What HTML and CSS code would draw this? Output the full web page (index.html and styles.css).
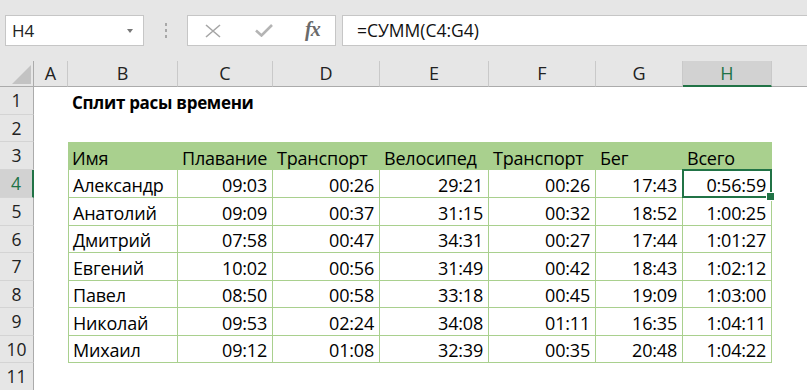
FILE: index.html
```html
<!DOCTYPE html>
<html lang="ru">
<head>
<meta charset="utf-8">
<link rel="stylesheet" href="styles.css">
</head>
<body>
<div class="app">
  <div class="toolbar">
    <div class="namebox"><span class="nb-text">H4</span><span class="nb-arrow"></span></div>
    <div class="grip"><i></i><i></i><i></i></div>
    <div class="fxbtns">
      <svg class="ic-x" width="16" height="14" viewBox="0 0 16 14"><path d="M1 1 L15 13 M15 1 L1 13" stroke="#a6a6a6" stroke-width="1.6" fill="none"/></svg>
      <svg class="ic-check" width="18" height="13" viewBox="0 0 18 13"><path d="M1 6.5 L6.5 11.5 L17 1" stroke="#b4b4b4" stroke-width="2.6" fill="none"/></svg>
      <span class="ic-fx">fx</span>
    </div>
    <div class="formula">=СУММ(C4:G4)</div>
  </div>
  <div class="sheet">
    <div class="ch corner"><svg width="34" height="26" viewBox="0 0 34 26"><path d="M12 23 L31 23 L31 4 Z" fill="#c3c3c3"/></svg></div>
    <div class="ch">A</div><div class="ch">B</div><div class="ch">C</div><div class="ch">D</div><div class="ch">E</div><div class="ch">F</div><div class="ch">G</div><div class="ch sel">H</div><div class="ch last"></div>

    <div class="rh">1</div><div class="c"></div><div class="c title">Сплит расы времени</div><div class="c"></div><div class="c"></div><div class="c"></div><div class="c"></div><div class="c"></div><div class="c"></div><div class="c"></div>

    <div class="rh">2</div><div class="c"></div><div class="c"></div><div class="c"></div><div class="c"></div><div class="c"></div><div class="c"></div><div class="c"></div><div class="c"></div><div class="c"></div>

    <div class="rh">3</div><div class="c"></div><div class="c th">Имя</div><div class="c th">Плавание</div><div class="c th">Транспорт</div><div class="c th">Велосипед</div><div class="c th">Транспорт</div><div class="c th">Бег</div><div class="c th">Всего</div><div class="c"></div>

    <div class="rh sel">4</div><div class="c"></div><div class="c td first">Александр</div><div class="c td num">09:03</div><div class="c td num">00:26</div><div class="c td num">29:21</div><div class="c td num">00:26</div><div class="c td num">17:43</div><div class="c td num active">0:56:59</div><div class="c"></div>

    <div class="rh">5</div><div class="c"></div><div class="c td first">Анатолий</div><div class="c td num">09:09</div><div class="c td num">00:37</div><div class="c td num">31:15</div><div class="c td num">00:32</div><div class="c td num">18:52</div><div class="c td num">1:00:25</div><div class="c"></div>

    <div class="rh">6</div><div class="c"></div><div class="c td first">Дмитрий</div><div class="c td num">07:58</div><div class="c td num">00:47</div><div class="c td num">34:31</div><div class="c td num">00:27</div><div class="c td num">17:44</div><div class="c td num">1:01:27</div><div class="c"></div>

    <div class="rh">7</div><div class="c"></div><div class="c td first">Евгений</div><div class="c td num">10:02</div><div class="c td num">00:56</div><div class="c td num">31:49</div><div class="c td num">00:42</div><div class="c td num">18:43</div><div class="c td num">1:02:12</div><div class="c"></div>

    <div class="rh">8</div><div class="c"></div><div class="c td first">Павел</div><div class="c td num">08:50</div><div class="c td num">00:58</div><div class="c td num">33:18</div><div class="c td num">00:45</div><div class="c td num">19:09</div><div class="c td num">1:03:00</div><div class="c"></div>

    <div class="rh">9</div><div class="c"></div><div class="c td first">Николай</div><div class="c td num">09:53</div><div class="c td num">02:24</div><div class="c td num">34:08</div><div class="c td num">01:11</div><div class="c td num">16:35</div><div class="c td num">1:04:11</div><div class="c"></div>

    <div class="rh">10</div><div class="c"></div><div class="c td first">Михаил</div><div class="c td num">09:12</div><div class="c td num">01:08</div><div class="c td num">32:39</div><div class="c td num">00:35</div><div class="c td num">20:48</div><div class="c td num">1:04:22</div><div class="c"></div>

    <div class="rh">11</div><div class="c"></div><div class="c"></div><div class="c"></div><div class="c"></div><div class="c"></div><div class="c"></div><div class="c"></div><div class="c"></div><div class="c"></div>
  </div>
</div>
</body>
</html>
```
FILE: styles.css
```css
* { box-sizing: border-box; }
html, body { margin: 0; padding: 0; }
body {
  width: 807px;
  height: 390px;
  overflow: hidden;
  background: #fff;
  font-family: "Open Sans", "Noto Sans", sans-serif;
}
.app { display: flex; flex-direction: column; }
.toolbar {
  height: 61px;
  background: #e6e6e6;
  display: flex;
  align-items: flex-start;
  padding-top: 15px;
  padding-left: 5px;
}
.namebox {
  width: 139px;
  height: 31px;
  background: #fff;
  border: 1px solid #c6c6c6;
  display: flex;
  align-items: center;
  justify-content: space-between;
  padding: 0 10px 0 6px;
}
.nb-text { font-size: 17px; color: #222; }
.nb-arrow {
  width: 0; height: 0;
  border-left: 3.5px solid transparent;
  border-right: 3.5px solid transparent;
  border-top: 4px solid #777;
}
.grip {
  width: 43px;
  height: 31px;
  display: flex;
  flex-direction: column;
  align-items: center;
  justify-content: center;
  gap: 3px;
}
.grip i { display: block; width: 2px; height: 3px; background: #a8a8a8; }
.fxbtns {
  width: 149px;
  height: 31px;
  background: #fff;
  border: 1px solid #c6c6c6;
  display: flex;
  align-items: center;
  padding-left: 17px;
}
.ic-x { margin-right: 34px; }
.ic-check { margin-right: 32px; }
.ic-fx {
  font-family: "Liberation Serif", serif;
  font-style: italic;
  font-weight: bold;
  font-size: 20px;
  color: #6a6a6a;
  letter-spacing: -1px;
  margin-top: -3px;
}
.formula {
  margin-left: 6px;
  flex: 1;
  height: 31px;
  background: #fff;
  border: 1px solid #c6c6c6;
  border-right: none;
  font-size: 17.5px;
  color: #111;
  padding-left: 14px;
  line-height: 29px;
}
.sheet {
  display: grid;
  grid-template-columns: 34px 34px 110px 95px 107px 109px 107px 87px 89px 1fr;
  grid-template-rows: 26px 28px 27px 28px 28px 28px 27px 28px 27px 28px 27px 28px;
}
.ch {
  background: #e6e6e6;
  border-right: 1px solid #c9c9c9;
  border-bottom: 1px solid #ababab;
  font-size: 18px;
  color: #222;
  text-align: center;
  line-height: 25px;
}
.ch.corner { border-right: 1px solid #ababab; line-height: 0; }
.ch.last { border-right: none; }
.ch.sel {
  background: #d2d2d2;
  color: #217346;
  border-bottom: 2px solid #217346;
}
.rh {
  background: #e6e6e6;
  border-right: 1px solid #ababab;
  border-bottom: 1px solid #d4d4d4;
  font-size: 17.5px;
  color: #222;
  text-align: center;
  line-height: 27px;
}
.rh.sel {
  background: #d2d2d2;
  color: #217346;
  border-right: 2px solid #217346;
}
.c {
  font-family: "Open Sans", "Noto Sans", sans-serif;
  font-size: 18px;
  letter-spacing: -0.2px;
  color: #000;
  display: flex;
  align-items: flex-end;
  padding: 0 5px 1px 4px;
  line-height: 22px;
  white-space: nowrap;
  position: relative;
}
.title { font-weight: bold; font-size: 17px; letter-spacing: -0.3px; }
.th { background: #a9d08e; }
.td {
  border-right: 1px solid #a9d08e;
  border-bottom: 1px solid #a9d08e;
}
.td.first { border-left: 1px solid #a9d08e; }
.num { justify-content: flex-end; }
.active::after {
  content: "";
  position: absolute;
  left: -1px; top: -1px; right: -1px; bottom: -1px;
  border: 2px solid #217346;
}
.active::before {
  content: "";
  position: absolute;
  right: -4px; bottom: -4px;
  width: 7px; height: 7px;
  background: #217346;
  border: 1px solid #fff;
  z-index: 2;
}
```
